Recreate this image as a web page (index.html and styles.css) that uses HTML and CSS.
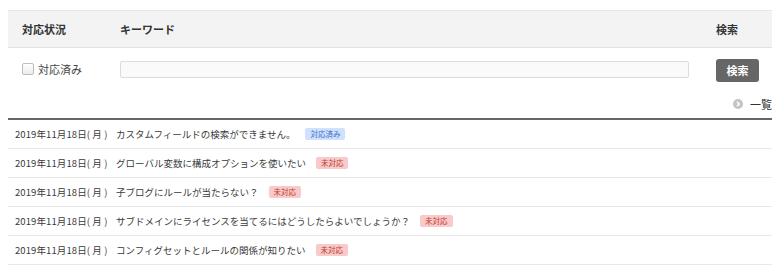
FILE: index.html
```html
<!DOCTYPE html>
<html lang="ja">
<head>
    <meta charset="UTF-8">
    <title>問い合わせ一覧</title>
    <link rel="stylesheet" href="styles.css">
</head>
<body>
    <div class="container">
        <div class="search-head">
            <div class="col-status">対応状況</div>
            <div class="col-keyword">キーワード</div>
            <div class="col-submit">検索</div>
        </div>
        <div class="search-row">
            <label class="col-status check-label">
                <input type="checkbox" class="check">
                <span>対応済み</span>
            </label>
            <div class="col-keyword">
                <input type="text" class="keyword-input">
            </div>
            <div class="col-submit">
                <button class="search-btn">検索</button>
            </div>
        </div>
        <div class="list-link">
            <a href="#">
                <svg width="10" height="10" viewBox="0 0 10 10">
                    <circle cx="5" cy="5" r="5" fill="#c4c4c4"/>
                    <path d="M4 2.8 L6.2 5 L4 7.2" fill="none" stroke="#fff" stroke-width="1.5"/>
                </svg>
                <span>一覧</span>
            </a>
        </div>
        <ul class="topic-list">
            <li class="topic">
                <span class="date">2019年11月18日( 月 )</span>
                <span class="title">カスタムフィールドの検索ができません。</span>
                <span class="badge done">対応済み</span>
            </li>
            <li class="topic">
                <span class="date">2019年11月18日( 月 )</span>
                <span class="title">グローバル変数に構成オプションを使いたい</span>
                <span class="badge open">未対応</span>
            </li>
            <li class="topic">
                <span class="date">2019年11月18日( 月 )</span>
                <span class="title">子ブログにルールが当たらない？</span>
                <span class="badge open">未対応</span>
            </li>
            <li class="topic">
                <span class="date">2019年11月18日( 月 )</span>
                <span class="title">サブドメインにライセンスを当てるにはどうしたらよいでしょうか？</span>
                <span class="badge open">未対応</span>
            </li>
            <li class="topic">
                <span class="date">2019年11月18日( 月 )</span>
                <span class="title">コンフィグセットとルールの関係が知りたい</span>
                <span class="badge open">未対応</span>
            </li>
        </ul>
    </div>
</body>
</html>
```

FILE: styles.css
```css
body {
    margin: 0;
    background: #ffffff;
    font-family: "Noto Sans CJK JP", "Noto Sans", sans-serif;
    color: #333;
}

.container {
    padding: 10px 8px 0;
}

.search-head,
.search-row {
    display: grid;
    grid-template-columns: 98px 1fr 56px;
    align-items: center;
    padding-left: 14px;
}

.search-head {
    height: 36px;
    background: #f3f3f3;
    border-top: 1px solid #e6e6e6;
    border-bottom: 1px solid #e2e2e2;
    font-size: 11px;
    font-weight: bold;
    color: #333;
}

.search-row {
    height: 42px;
}

.col-keyword {
    padding-right: 27px;
}

.check-label {
    display: flex;
    align-items: center;
    gap: 4px;
    font-size: 11px;
    color: #444;
}

.check {
    appearance: none;
    -webkit-appearance: none;
    width: 12px;
    height: 12px;
    margin: 0;
    border: 1px solid #bdbdbd;
    border-radius: 2px;
    background: linear-gradient(#ffffff, #ececec);
}

.keyword-input {
    display: block;
    width: 100%;
    height: 17px;
    box-sizing: border-box;
    border: 1px solid #dcdcdc;
    border-radius: 2px;
    background: #fafafa;
}

.search-btn {
    width: 43px;
    height: 23px;
    padding: 0;
    border: none;
    border-radius: 3px;
    background: #666;
    color: #fff;
    font-family: inherit;
    font-size: 11px;
    font-weight: bold;
}

.list-link {
    display: flex;
    justify-content: flex-end;
    align-items: center;
    height: 28px;
    border-bottom: 2px solid #666;
}

.list-link a {
    display: flex;
    align-items: center;
    gap: 7px;
    color: #333;
    text-decoration: none;
    font-size: 11px;
}

.topic-list {
    list-style: none;
    margin: 0;
    padding: 0;
}

.topic {
    display: flex;
    align-items: center;
    height: 28px;
    padding-left: 7px;
    border-bottom: 1px solid #e8e8e8;
    font-size: 9.5px;
    color: #3a3a3a;
}

.date {
    width: 101px;
    letter-spacing: 0.1px;
}

.badge {
    margin-left: 10px;
    padding: 1px 5px;
    border-radius: 2px;
    font-size: 7.5px;
    line-height: 10px;
}

.badge.done {
    background: #cfe1fc;
    color: #3b73c8;
}

.badge.open {
    background: #f9caca;
    color: #c0392b;
}
```
